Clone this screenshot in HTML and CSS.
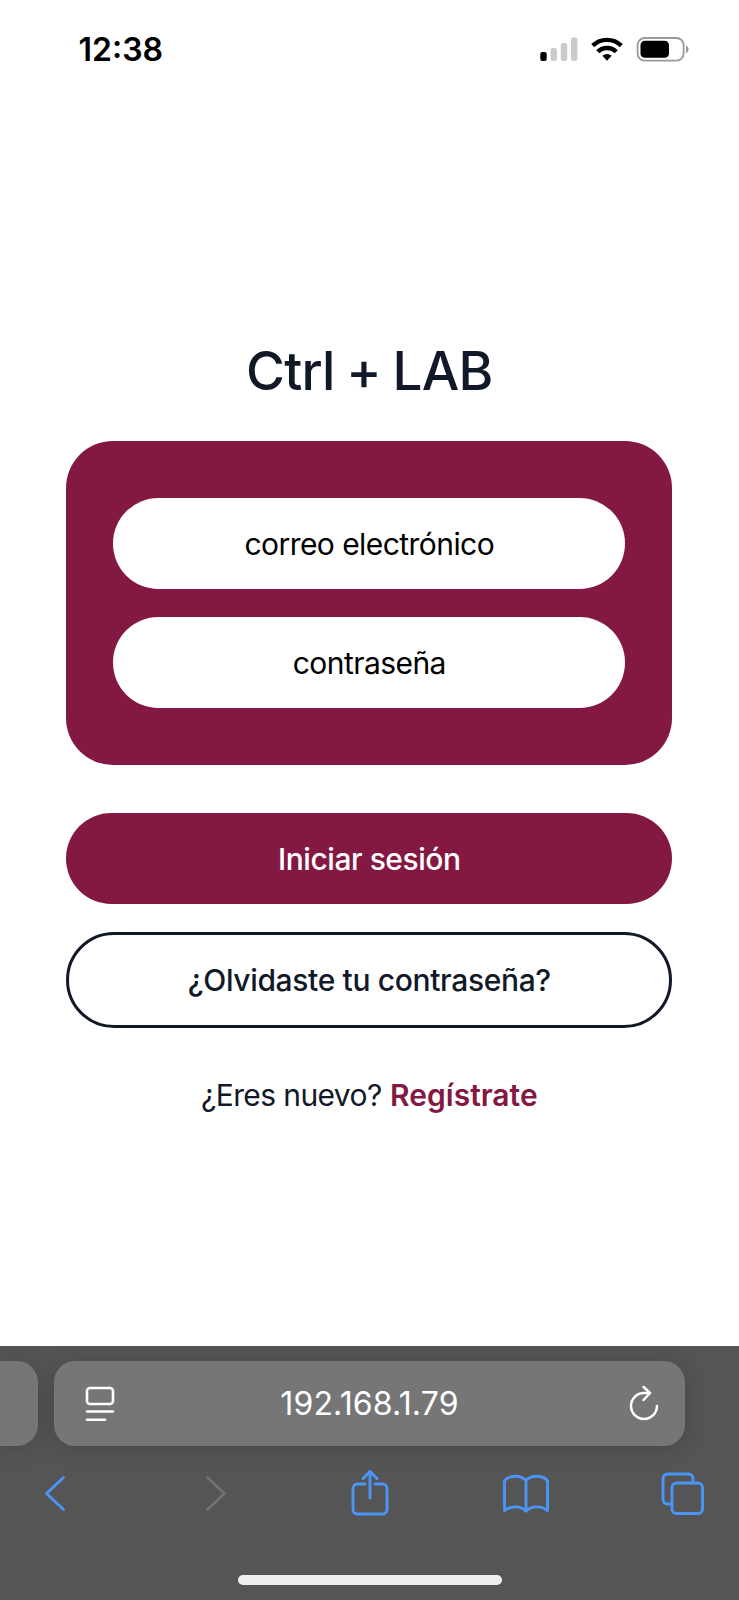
FILE: index.html
```html
<!DOCTYPE html>
<html lang="es">
<head>
<meta charset="utf-8">
<title>Ctrl + LAB</title>
<link rel="stylesheet" href="styles.css">
</head>
<body>
<div class="phone">
  <header class="status">
    <span class="time">12:38</span>
    <svg class="status-icons" width="150" height="28" viewBox="0 0 150 28">
      <rect x="0.3" y="15" width="6.4" height="9" rx="2"/>
      <g fill="#cbcbcb"><rect x="10.6" y="11" width="6.4" height="13" rx="2"/><rect x="20.8" y="6" width="6.4" height="18" rx="2"/><rect x="31" y="0.5" width="6.4" height="23.5" rx="2"/></g>
      <g fill="none" stroke="#000" stroke-width="4.4"><path d="M52.7 8.7a20.5 20.5 0 0 1 28.6 0"/><path d="M57.8 14.8a13 13 0 0 1 18.400 0"/></g>
      <path d="M62.3 18.7a7 7 0 0 1 9.4 0L67 23.8z"/>
      <rect x="97.6" y="1" width="46" height="22.6" rx="7" fill="none" stroke="#999" stroke-width="1.8"/>
      <rect x="100.5" y="3.8" width="28.5" height="17" rx="4.4"/>
      <path d="M146 8.5c3.4 1.2 3.4 6.4 0 7.6z" fill="#999"/>
    </svg>
  </header>
  <main class="login">
    <h1 class="title">Ctrl + LAB</h1>
    <form class="card">
      <div class="field">correo electrónico</div>
      <div class="field">contraseña</div>
    </form>
    <div class="button primary">Iniciar sesión</div>
    <div class="button outline">¿Olvidaste tu contraseña?</div>
    <p class="signup"><span>¿Eres nuevo?</span> <b>Regístrate</b></p>
  </main>
  <footer class="browser">
    <div class="tabs">
      <div class="side-tab"></div>
      <div class="address">
        <svg width="30" height="36" viewBox="0 0 30 36" fill="none" stroke="#fff" stroke-width="2.6" stroke-linecap="round"><rect x="2" y="2" width="26" height="16" rx="3"/><path d="M2 25.5h26M2 33.7h18"/></svg>
        <span class="url">192.168.1.79</span>
        <svg class="reload" width="30" height="36" viewBox="0 0 30 36" fill="none" stroke="#fff" stroke-width="2.5" stroke-linecap="round" stroke-linejoin="round"><path d="M28 20a13 13 0 1 1-13-13h6M14.500 .8L21 7l-6.500 7"/></svg>
      </div>
    </div>
    <nav class="tools">
      <svg class="back" width="22" height="46" viewBox="0 0 22 46"><path d="M19.5 7.5L2.5 23.5l17 16"/></svg>
      <svg class="forward" width="22" height="46" viewBox="0 0 22 46"><path d="M2.5 7.5l17 16-17 16"/></svg>
      <svg class="share" width="38" height="46" viewBox="0 0 38 46"><path d="M14 14H6.500a4.500 4.500 0 0 0-4.500 4.500v21a4.500 4.500 0 0 0 4.500 4.500h25a4.500 4.500 0 0 0 4.500-4.500v-21a4.500 4.500 0 0 0-4.500-4.500H24M19 28V1.500M12 8.500l7-7 7 7"/></svg>
      <svg class="book" width="46" height="46" viewBox="0 0 46 46"><path d="M23 10.500C18 4.800 6.500 4.800 1.500 10.800v29.700c6.500-5 16-5 21.500 .8 5.500-5.800 15-5.800 21.500-.8V10.800C39.500 4.800 28 4.800 23 10.500zv30.800"/></svg>
      <svg width="43" height="46" viewBox="0 0 43 46"><rect x="11" y="13" width="30.500" height="30.500" rx="4.500"/><path d="M11 34H6.500A4.500 4.500 0 0 1 2 29.500V8.500A4.500 4.500 0 0 1 6.500 4h21A4.500 4.500 0 0 1 32 8.500V13"/></svg>
    </nav>
    <div class="home"></div>
  </footer>
</div>
</body>
</html>
```
FILE: styles.css
```css
* { box-sizing: border-box; }
body { margin: 0; background: #fff; font-family: Inter, "Liberation Sans", sans-serif; }
.phone { width: 739px; height: 1600px; display: flex; flex-direction: column; overflow: hidden; }
.status { height: 100px; display: flex; justify-content: space-between; align-items: flex-start; padding: 37px 49px 0 78.5px; }
.time { font-size: 32px; font-weight: 600; line-height: 26px; }
.status-icons { display: block; }
.login { flex: 1; display: flex; flex-direction: column; padding: 231px 66.7px 0 66.3px; font-size: 30px; color: #111827; }
.title { margin: 0 0 30px; height: 80px; line-height: 80px; font-size: 53px; font-weight: 500; text-align: center; letter-spacing: -.75px; word-spacing: -1.8px; }
.card { height: 324px; padding: 57px 47px; border-radius: 47px; background: #831843; display: flex; flex-direction: column; gap: 28px; margin-bottom: 48px; }
.field, .button { height: 91px; border-radius: 48px; display: flex; align-items: center; justify-content: center; }
.field { background: #fff; color: #000; letter-spacing: -.56px; padding-top: 1px; }
.button { font-weight: 500; }
.primary { background: #831843; color: #fff; margin-bottom: 28px; letter-spacing: -.46px; }
.outline { height: 96px; border: 3px solid #111827; letter-spacing: -.35px; }
.signup { margin: 46px 0 0; line-height: 42px; text-align: center; }
.signup span { letter-spacing: -.6px; }
.signup b { color: #831843; font-weight: 600; }
.browser { height: 254px; background: #555; display: flex; flex-direction: column; align-items: center; }
.tabs { width: 739px; height: 100px; padding-top: 15px; display: flex; gap: 15.5px; }
.side-tab, .address { height: 85px; background: #767676; box-shadow: 0 3px 24px rgba(0,0,0,.16); }
.side-tab { width: 38px; border-radius: 0 21px 21px 0; }
.address { width: 631.5px; border-radius: 21px; padding: 0 26px 0 31.5px; display: flex; align-items: center; }
.url { flex: 1; text-align: center; color: #fff; font-size: 32px; letter-spacing: .15px; padding-right: 5px; }
.tools { width: 739px; height: 70px; padding-left: 44px; margin-top: 24px; display: flex; align-items: flex-start; }
.tools svg { flex: none; fill: none; stroke: #4b94f8; stroke-width: 2.9; stroke-linecap: round; stroke-linejoin: round; }
.tools .back { margin-right: 139px; }
.tools .forward { margin-right: 123.5px; stroke: #707070; }
.tools .share { margin-right: 114px; }
.tools .book { margin-right: 112px; }
.home { width: 264px; height: 10px; border-radius: 5px; background: #eee; margin-top: 35px; }
```
